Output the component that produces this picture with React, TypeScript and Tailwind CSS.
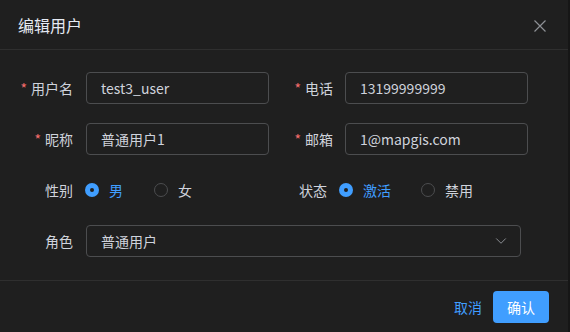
import { ChevronDown } from 'lucide-react';

const font = "font-['Noto_Sans_CJK_SC','Noto_Sans',sans-serif]";

function Label({ text, required, w }: { text: string; required?: boolean; w: string }) {
  return (
    <div className={`${w} shrink-0 text-right text-[14px] text-[#cfd3dc] leading-none`}>
      {required && <span className="text-[#f56c6c] mr-[4px]">*</span>}
      {text}
    </div>
  );
}

function Input({ value, w }: { value: string; w: string }) {
  return (
    <div className={`${w} h-[32px] shrink-0 rounded-[4px] border border-[#4c4d4f] flex items-center pl-[14px] text-[14px] text-[#cfd3dc]`}>
      {value}
    </div>
  );
}

function Radio({ label, checked }: { label: string; checked?: boolean }) {
  return (
    <div className="flex items-center gap-[10px]">
      {checked ? (
        <span className="w-[14px] h-[14px] rounded-full bg-[#409eff] flex items-center justify-center">
          <span className="w-[4px] h-[4px] rounded-full bg-[#1f1f1f]" />
        </span>
      ) : (
        <span className="w-[14px] h-[14px] rounded-full border border-[#4c4d4f]" />
      )}
      <span className={`text-[14px] leading-none ${checked ? 'text-[#409eff]' : 'text-[#cfd3dc]'}`}>{label}</span>
    </div>
  );
}

export default function App() {
  return (
    <div className={`w-[570px] h-[332px] flex bg-[#161616] ${font}`}>
      <div className="w-[568px] h-full bg-[#1f1f1f] flex flex-col">
        {/* Header */}
        <div className="h-[50px] border-b border-[#2f2f2f] flex items-center justify-between pl-[18px] pr-[22px]">
          <span className="text-[16px] text-[#e5eaf3] leading-none mt-[1px]">编辑用户</span>
          <svg width="12" height="12" viewBox="0 0 12 12" className="mt-[3px]">
            <path d="M0.5 0.5 L11.5 11.5 M11.5 0.5 L0.5 11.5" stroke="#8d9095" strokeWidth="1.2" fill="none" />
          </svg>
        </div>

        {/* Form */}
        <div className="flex flex-col gap-[19px] pt-[22px] pb-[23px] border-b border-[#2f2f2f]">
          <div className="flex items-center">
            <div className="w-[269px] flex items-center gap-[13px]">
              <Label text="用户名" required w="w-[73px]" />
              <Input value="test3_user" w="w-[183px]" />
            </div>
            <div className="flex items-center gap-[12px]">
              <Label text="电话" required w="w-[64px]" />
              <Input value="13199999999" w="w-[183px]" />
            </div>
          </div>

          <div className="flex items-center">
            <div className="w-[269px] flex items-center gap-[13px]">
              <Label text="昵称" required w="w-[73px]" />
              <Input value="普通用户1" w="w-[183px]" />
            </div>
            <div className="flex items-center gap-[12px]">
              <Label text="邮箱" required w="w-[64px]" />
              <Input value="1@mapgis.com" w="w-[183px]" />
            </div>
          </div>

          <div className="flex items-center h-[32px]">
            <div className="w-[269px] flex items-center gap-[12px]">
              <Label text="性别" w="w-[73px]" />
              <div className="flex items-center gap-[31px]">
                <Radio label="男" checked />
                <Radio label="女" />
              </div>
            </div>
            <div className="flex items-center gap-[12px]">
              <Label text="状态" w="w-[58px]" />
              <div className="flex items-center gap-[30px]">
                <Radio label="激活" checked />
                <Radio label="禁用" />
              </div>
            </div>
          </div>

          <div className="flex items-center gap-[13px]">
            <Label text="角色" w="w-[73px]" />
            <div className="w-[435px] h-[32px] rounded-[4px] border border-[#4c4d4f] flex items-center justify-between pl-[14px] pr-[10px] text-[14px] text-[#cfd3dc]">
              <span>普通用户</span>
              <ChevronDown size={18} strokeWidth={1.3} className="text-[#8d9095]" />
            </div>
          </div>
        </div>

        {/* Footer */}
        <div className="flex items-center justify-end gap-[11px] pt-[10px] pr-[19px]">
          <button className="text-[14px] text-[#409eff] leading-none px-0">取消</button>
          <button className="w-[56px] h-[32px] rounded-[4px] bg-[#409eff] text-white text-[14px] leading-none">确认</button>
        </div>
      </div>
    </div>
  );
}
